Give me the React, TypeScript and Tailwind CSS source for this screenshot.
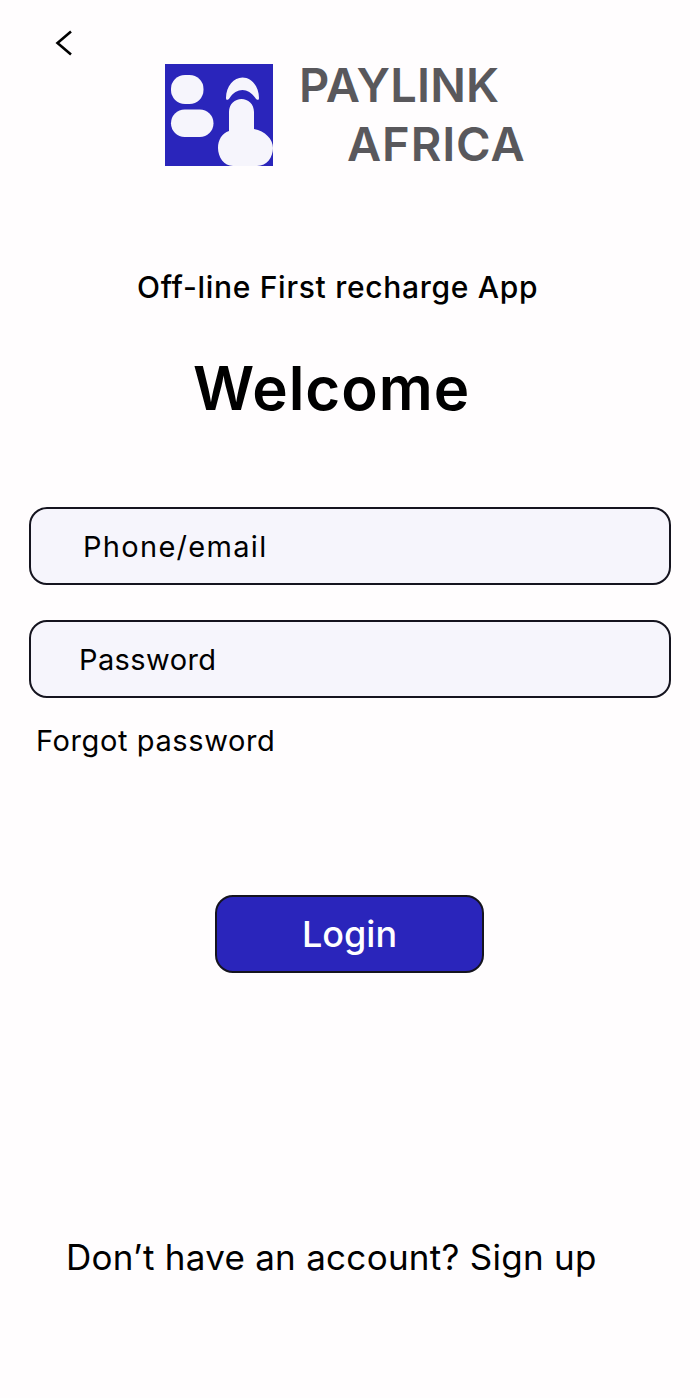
function BackArrow() {
    return (
        <svg width="20" height="28" viewBox="0 0 20 28" fill="none" stroke="#000" strokeWidth="2.6">
            <path d="M17 2.500 L3.500 14 L17 25.500" />
        </svg>
    );
}

function Logo() {
    return (
        <svg width="108" height="102" viewBox="0 0 108 102" className="shrink-0">
            <rect width="108" height="102" fill="#2a25bb" />
            <rect x="6" y="11" width="32.5" height="29" rx="14" fill="#f6f5fc" />
            <rect x="6" y="45.500" width="42.500" height="27.500" rx="13.700" fill="#f6f5fc" />
            <path d="M61 34 C61 22 69 13.500 77.500 13.500 C86 13.500 94 22 94 34 C94 37 91.500 36 90 33.500 C87 29 82 26 77.500 26 C73 26 67.500 29 65 33.500 C63.500 36 61 37 61 34 Z" fill="#f6f5fc" />
            <path d="M64 48 C64 40 70 35 76.500 35 C83 35 89 40 89 48 V65 C100 67 108 75 108 84 C108 93 102 102 92 102 H68 C59 102 53 93 53 84 C53 76 57 69 64 67 Z" fill="#f6f5fc" />
        </svg>
    );
}

function Field({ label, className }: { label: string; className: string }) {
    return (
        <div className="flex h-[78px] items-center rounded-[18px] border-2 border-[#15141f] bg-[#f6f5fc]">
            <span className={`text-[29px] leading-none text-black ${className}`}>{label}</span>
        </div>
    );
}

export default function App() {
    return (
        <div className="flex h-[1398px] w-[700px] flex-col overflow-hidden bg-[#fffdfe] font-['Inter',sans-serif] text-black">
            <div className="h-[64px] pl-[54px] pt-[29px]">
                <BackArrow />
            </div>

            <div className="flex pl-[165px]">
                <Logo />
                <div className="-mt-[9px] pl-[26px] text-[47px] leading-[59px] font-semibold text-[#59585c]">
                    <div className="tracking-[0.2px]">PAYLINK</div>
                    <div className="pl-[48px] tracking-[0.9px]">AFRICA</div>
                </div>
            </div>

            <p className="mt-[96px] pl-[137px] text-[30px] leading-9 font-medium tracking-[0.7px] text-black">Off-line First recharge App</p>
            <h1 className="mt-[47px] pl-[193px] text-[60px] leading-[72px] font-semibold tracking-[1px]">Welcome</h1>

            <div className="mt-[83px] flex flex-col gap-[35px] px-[29px]">
                <Field label="Phone/email" className="pl-[52px] tracking-[1.3px]" />
                <Field label="Password" className="pl-[48px] tracking-[0.4px]" />
            </div>
            <p className="mt-[25px] pl-9 text-[29px] leading-9 tracking-[0.6px] text-black">Forgot password</p>

            <button className="ml-[215px] mt-[136px] flex h-[78px] w-[269px] items-center justify-center rounded-[18px] border-2 border-[#15141f] bg-[#2a25bb] text-[36px] font-medium text-white">
                Login
            </button>

            <p className="mt-[262px] pl-[66px] text-[35px] leading-[44px] tracking-[0.27px] text-black">Don’t have an account? Sign up</p>
        </div>
    );
}
